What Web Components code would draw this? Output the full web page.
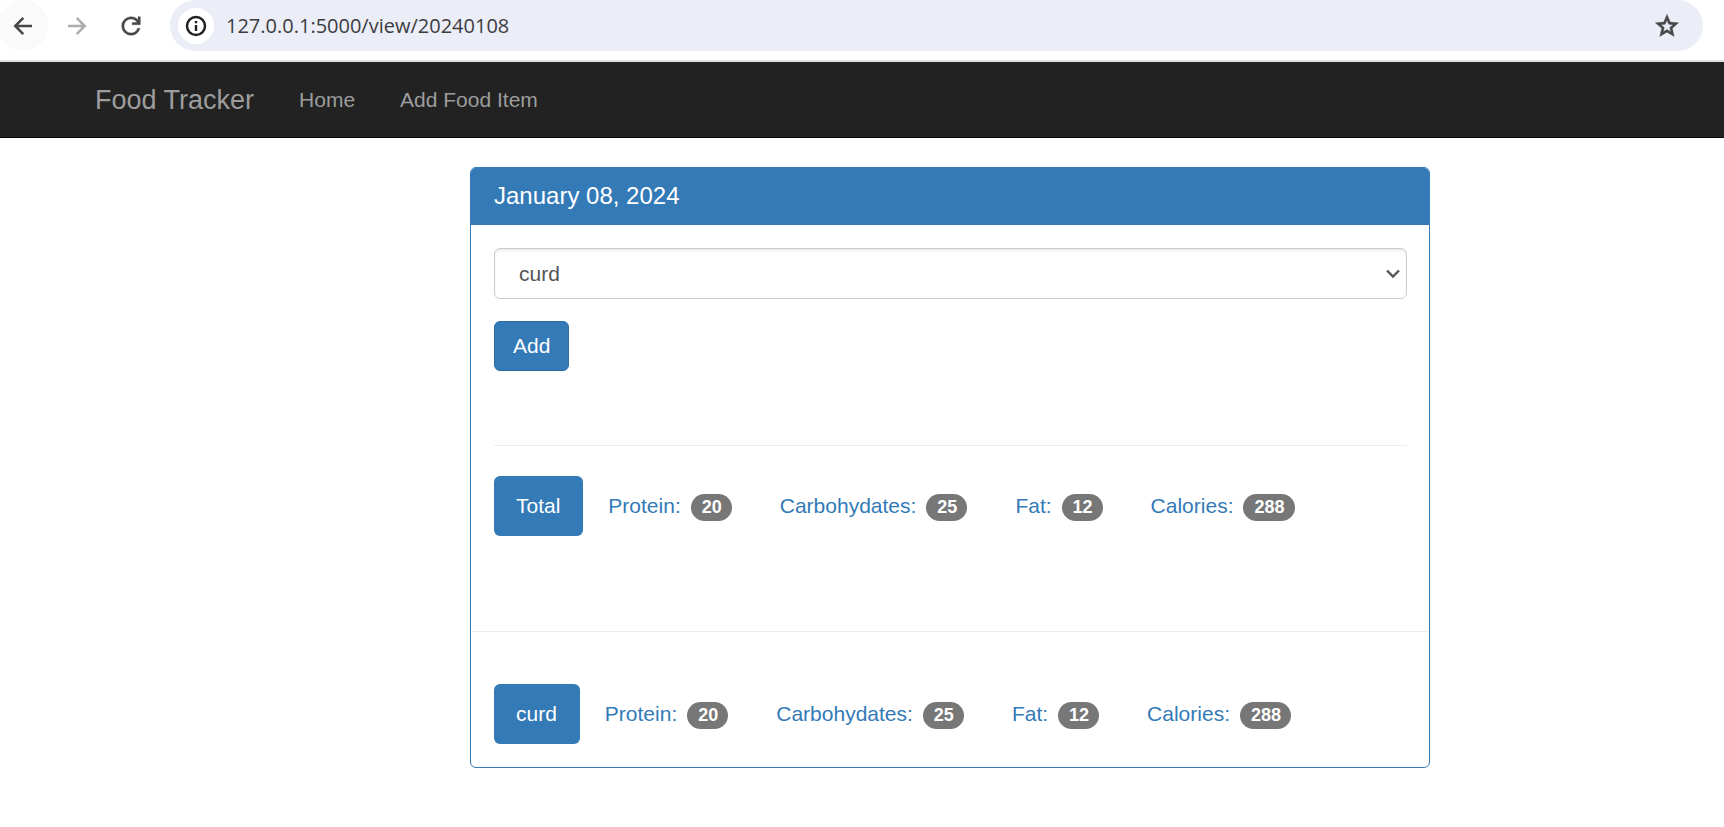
<!DOCTYPE html>
<html lang="en">
<head>
<meta charset="utf-8">
<title>Food Tracker</title>
<style>
body { margin: 0; background: #fff; font: 21px/30px "Liberation Sans", Arial, sans-serif; color: #333; }
.page { display: grid; grid-template-columns: 470fr 960fr 294fr; padding-top: 29px; }
day-panel { grid-column: 2; }
</style>
</head>
<body>
<browser-bar></browser-bar>
<nav-bar>
  <nav-link slot="brand" href="#" large>Food Tracker</nav-link>
  <nav-link href="#">Home</nav-link>
  <nav-link href="#">Add Food Item</nav-link>
</nav-bar>
<main class="page">
  <day-panel>
    <span slot="title">January 08, 2024</span>
    <add-food></add-food>
    <food-row slot="total" name="Total" protein="20" carbs="25" fat="12" calories="288"></food-row>
    <food-row slot="items" name="curd" protein="20" carbs="25" fat="12" calories="288"></food-row>
  </day-panel>
</main>
<script>
function define(name, render) {
  customElements.define(name, class extends HTMLElement {
    constructor() {
      super();
      this.attachShadow({ mode: 'open' });
    }
    connectedCallback() {
      this.shadowRoot.innerHTML = render(this);
    }
  });
}

define('browser-bar', () => `
<style>
  :host { display: flex; align-items: flex-start; height: 60px; border-bottom: 2px solid #dfe3e1; background: #fff; }
  button { border: 0; padding: 0; margin: 0; background: none; display: grid; place-items: center; flex: none; border-radius: 50%; }
  .nav { width: 50px; height: 51px; margin-right: 4px; color: #474747; }
  .nav:first-of-type { background: #fafafa; margin-left: -2px; }
  .off { color: #adadad; }
  .url { flex: 1; display: flex; align-items: center; height: 51px; margin: 0 21px 0 10px; border-radius: 26px; background: #ebeef7; padding: 0 22px 0 8px; }
  .info { width: 36px; height: 36px; background: #fff; color: #1f1f1f; margin-right: 12px; }
  input { flex: 1; min-width: 0; border: 0; padding: 0; background: none; outline: 0; font: 20px/28px "Open Sans", "Noto Sans", sans-serif; color: #3c3c3f; }
  .star { width: 28px; height: 28px; color: #474747; }
  svg { display: block; fill: none; stroke: currentColor; }
  .solid { fill: currentColor; stroke-width: .3; }
</style>
<button class="nav" aria-label="Back"><svg width="28" height="28" viewBox="0 0 28 28" stroke-width="2.5"><path d="M23 14H6.500M14.300 5.800L6.200 14L14.300 22.200"/></svg></button>
<button class="nav off" aria-label="Forward"><svg width="28" height="28" viewBox="0 0 28 28" stroke-width="2.5"><path d="M5 14H21.500M13.700 5.800L21.800 14L13.700 22.200"/></svg></button>
<button class="nav" aria-label="Reload"><svg class="solid" width="28" height="28" viewBox="0 0 24 24"><path d="M12 20q-3.350 0-5.675-2.325T4 12q0-3.350 2.325-5.675T12 4q1.725 0 3.300.712T18 6.750V4h2v7h-7V9h4.200q-.8-1.400-2.187-2.200T12 6Q9.500 6 7.750 7.750T6 12q0 2.500 1.750 4.250T12 18q1.925 0 3.475-1.100T17.650 14h2.100q-.7 2.650-2.850 4.325T12 20Z"/></svg></button>
<div class="url">
  <button class="info" aria-label="Site information"><svg width="24" height="24" viewBox="0 0 24 24" stroke-width="2.4"><circle cx="12" cy="12" r="9"/><path d="M12 11V17M12 7V9.300"/></svg></button>
  <input aria-label="Address" value="127.0.0.1:5000/view/20240108">
  <button class="star" aria-label="Bookmark"><svg class="solid" width="28" height="28" viewBox="0 0 24 24"><path d="m8.850 16.825 3.150-1.900 3.150 1.925-.825-3.600 2.775-2.400-3.650-.325-1.450-3.400-1.450 3.375-3.650.325 2.775 2.425zM5.825 21l1.625-7.025L2 9.250l7.200-.625L12 2l2.800 6.625 7.200.625-5.450 4.725L18.175 21 12 17.275z"/></svg></button>
</div>`);

define('nav-bar', () => `
<style>
  :host { display: block; background: #222; border-bottom: 1px solid #080808; }
  nav { display: flex; align-items: center; gap: 45px; height: 75px; padding-left: 95px; }
</style>
<nav><slot name="brand"></slot><slot></slot></nav>`);

define('nav-link', el => `
<style>
  :host { display: block; }
  :host([large]) { font-size: 27px; }
  a { color: #9d9d9d; text-decoration: none; }
</style>
<a href="${el.getAttribute('href')}"><slot></slot></a>`);

define('day-panel', () => `
<style>
  :host { display: block; border: 1px solid #337ab7; border-radius: 6px; overflow: hidden; }
  h3 { margin: 0; padding: 13px 23px 15px; background: #337ab7; color: #fff; font-size: 24px; line-height: 29px; font-weight: 400; }
  .body { padding: 23px 22px 95px 23px; }
  hr { border: 0; border-top: 1px solid #eee; margin: 74px 0 30px; }
  .items { border-top: 1px solid #eee; padding: 52px 22px 23px 23px; }
</style>
<h3><slot name="title"></slot></h3>
<div class="body"><slot></slot><hr><slot name="total"></slot></div>
<div class="items"><slot name="items"></slot></div>`);

define('add-food', () => `
<style>
  :host { display: block; }
  form { display: flex; flex-direction: column; align-items: flex-start; gap: 22px; margin: 0; }
  .field { display: grid; width: 100%; align-items: center; }
  .field > * { grid-area: 1 / 1; }
  select { appearance: none; width: 100%; height: 51px; padding: 0 24px; border: 1px solid #ccc; border-radius: 6px; background: #fff; color: #555; font: inherit; box-shadow: inset 0 2px 2px rgba(0,0,0,.075); }
  svg { justify-self: end; margin-right: 6px; fill: none; stroke: #555; pointer-events: none; }
  button { height: 50px; padding: 0 18px; border: 1px solid #2e6da4; border-radius: 6px; background: #337ab7; color: #fff; font: inherit; }
</style>
<form onsubmit="return false">
  <div class="field">
    <select aria-label="Food item"><option>curd</option></select>
    <svg width="16" height="16" viewBox="0 0 16 16" stroke-width="2.400"><path d="M2 4.500L8 10.500L14 4.500"/></svg>
  </div>
  <button>Add</button>
</form>`);

define('food-row', el => `
<style>
  :host { display: block; }
  ul { list-style: none; margin: 0; padding: 0; display: flex; gap: 3px; }
  a { display: flex; align-items: center; gap: 10px; height: 60px; padding: 0 23px 0 22px; border-radius: 6px; color: #337ab7; text-decoration: none; }
  .active { background: #337ab7; color: #fff; }
  .badge { margin-top: 3px; padding: 0 10px 0 11px; border-radius: 14px; background: #777; color: #fff; font-size: 18px; line-height: 27px; font-weight: 700; }
</style>
<ul>
  <li><a class="active" href="#">${el.getAttribute('name')}</a></li>
  ${[['Protein', 'protein'], ['Carbohydates', 'carbs'], ['Fat', 'fat'], ['Calories', 'calories']].map(([label, key]) =>
    `<li><a href="#">${label}: <span class="badge">${el.getAttribute(key)}</span></a></li>`).join('')}
</ul>`);
</script>
</body>
</html>
